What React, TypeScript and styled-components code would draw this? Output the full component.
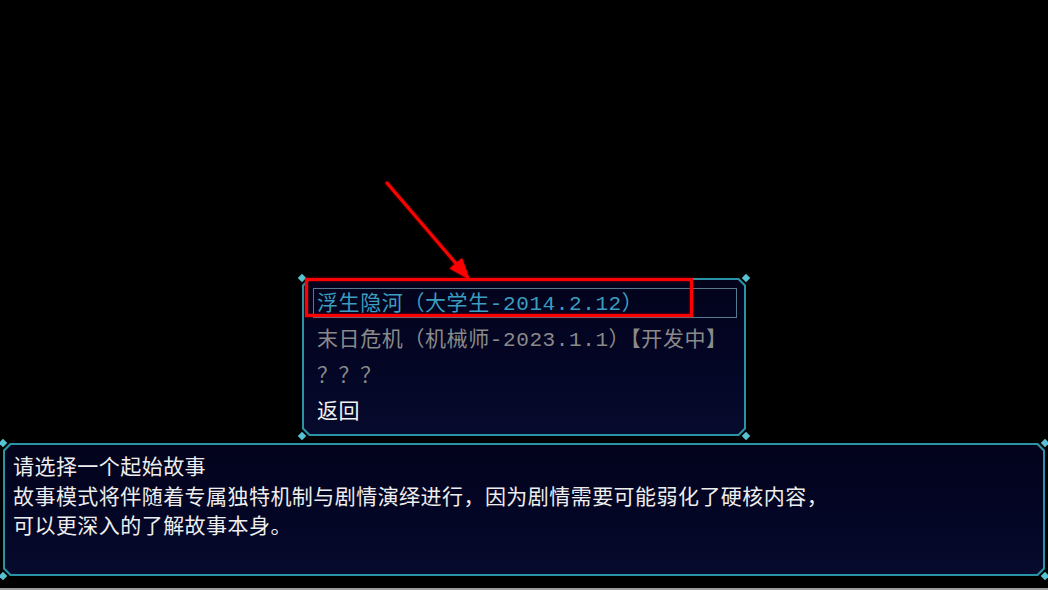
import React from "react";
import styled, { createGlobalStyle } from "styled-components";

const GlobalStyle = createGlobalStyle`
  html, body { margin: 0; padding: 0; background: #000; }
  body { font-family: "Liberation Mono", "Noto Sans CJK SC", monospace; }
  * { box-sizing: border-box; }
`;

const TEAL = "#2b93a6";
const STUD = "#55c3d3";

const Screen = styled.div`
  position: relative;
  width: 1048px;
  height: 590px;
  background: #000;
  display: flex;
  flex-direction: column;
  justify-content: flex-end;
  align-items: center;
  overflow: hidden;
`;

const Window = styled.div<{ $w: string; $h: number }>`
  position: relative;
  width: ${(p) => p.$w};
  height: ${(p) => p.$h}px;
  flex: none;
`;

const chamfer = (c: number) =>
  `polygon(${c}px 0, calc(100% - ${c}px) 0, 100% ${c}px, 100% calc(100% - ${c}px), calc(100% - ${c}px) 100%, ${c}px 100%, 0 calc(100% - ${c}px), 0 ${c}px)`;

const Rim = styled.div`
  width: 100%;
  height: 100%;
  padding: 2px;
  background: ${TEAL};
  clip-path: ${chamfer(7)};
`;

const Panel = styled.div<{ $pad: string }>`
  width: 100%;
  height: 100%;
  padding: ${(p) => p.$pad};
  background: linear-gradient(180deg, #03031c 0%, #040626 60%, #060a2c 100%);
  clip-path: ${chamfer(6)};
`;

const Stud = styled.span<{ $x: "left" | "right"; $y: "top" | "bottom" }>`
  position: absolute;
  ${(p) => p.$x}: -3px;
  ${(p) => p.$y}: -3px;
  width: 6px;
  height: 6px;
  background: ${STUD};
  transform: rotate(45deg);
`;

const Studs = () => (
  <>
    <Stud $x="left" $y="top" />
    <Stud $x="right" $y="top" />
    <Stud $x="left" $y="bottom" />
    <Stud $x="right" $y="bottom" />
  </>
);

const ChoiceList = styled.ul`
  list-style: none;
  margin: 0;
  padding: 0;
  display: flex;
  flex-direction: column;
  gap: 6px;
`;

type Tone = "active" | "locked" | "normal";

const Choice = styled.li<{ $tone: Tone; $selected?: boolean }>`
  height: 30px;
  padding: 3px 0 0 4px;
  line-height: 27px;
  font-size: 21px;
  white-space: nowrap;
  letter-spacing: 0.6px;
  color: ${(p) =>
    p.$tone === "active" ? "#3b9dbf" : p.$tone === "locked" ? "#8a8a8a" : "#f2f2f2"};
  outline: ${(p) => (p.$selected ? "1px solid #57798c" : "none")};
  outline-offset: -1px;
`;

const Message = styled.div`
  font-size: 21px;
  letter-spacing: 0.45px;
  line-height: 29.5px;
  color: #eeeeee;
  white-space: nowrap;
`;

const MenuSlot = styled.div`
  margin-bottom: 7px;
`;

const DialogSlot = styled.div`
  width: 100%;
  padding: 0 3px;
`;

const Gutter = styled.div`
  height: 12px;
  flex: none;
`;

const EdgeBar = styled.div`
  width: 100%;
  height: 2px;
  flex: none;
  background: #9c9c9c;
`;

const Annotation = styled.svg`
  position: absolute;
  left: 0;
  top: 0;
  pointer-events: none;
  filter: drop-shadow(0 0 1px rgba(255, 0, 0, 0.6));
`;

const choices: { label: string; tone: Tone }[] = [
  { label: "浮生隐河（大学生-2014.2.12）", tone: "active" },
  { label: "末日危机（机械师-2023.1.1）【开发中】", tone: "locked" },
  { label: "？？？", tone: "locked" },
  { label: "返回", tone: "normal" },
];

export default function App() {
  return (
    <>
      <GlobalStyle />
      <Screen>
        <MenuSlot>
          <Window $w="444px" $h={158}>
            <Rim>
              <Panel $pad="8px 7px 8px 9px">
                <ChoiceList>
                  {choices.map((c, i) => (
                    <Choice key={c.label} $tone={c.tone} $selected={i === 0}>
                      {c.label}
                    </Choice>
                  ))}
                </ChoiceList>
              </Panel>
            </Rim>
            <Studs />
          </Window>
        </MenuSlot>
        <DialogSlot>
          <Window $w="100%" $h={133}>
            <Rim>
              <Panel $pad="9px 8px 5px">
                <Message>请选择一个起始故事</Message>
                <Message>故事模式将伴随着专属独特机制与剧情演绎进行，因为剧情需要可能弱化了硬核内容，</Message>
                <Message>可以更深入的了解故事本身。</Message>
              </Panel>
            </Rim>
            <Studs />
          </Window>
        </DialogSlot>
        <Gutter />
        <EdgeBar />
        <Annotation width="1048" height="590" viewBox="0 0 1048 590">
          <rect x="306.5" y="279.5" width="385" height="36" fill="none" stroke="#ff0000" strokeWidth="3" />
          <line x1="387" y1="183" x2="459" y2="267" stroke="#ff0000" strokeWidth="3" strokeLinecap="round" />
          <polygon points="470,280 449.5,268.5 462,258" fill="#ff0000" />
        </Annotation>
      </Screen>
    </>
  );
}
